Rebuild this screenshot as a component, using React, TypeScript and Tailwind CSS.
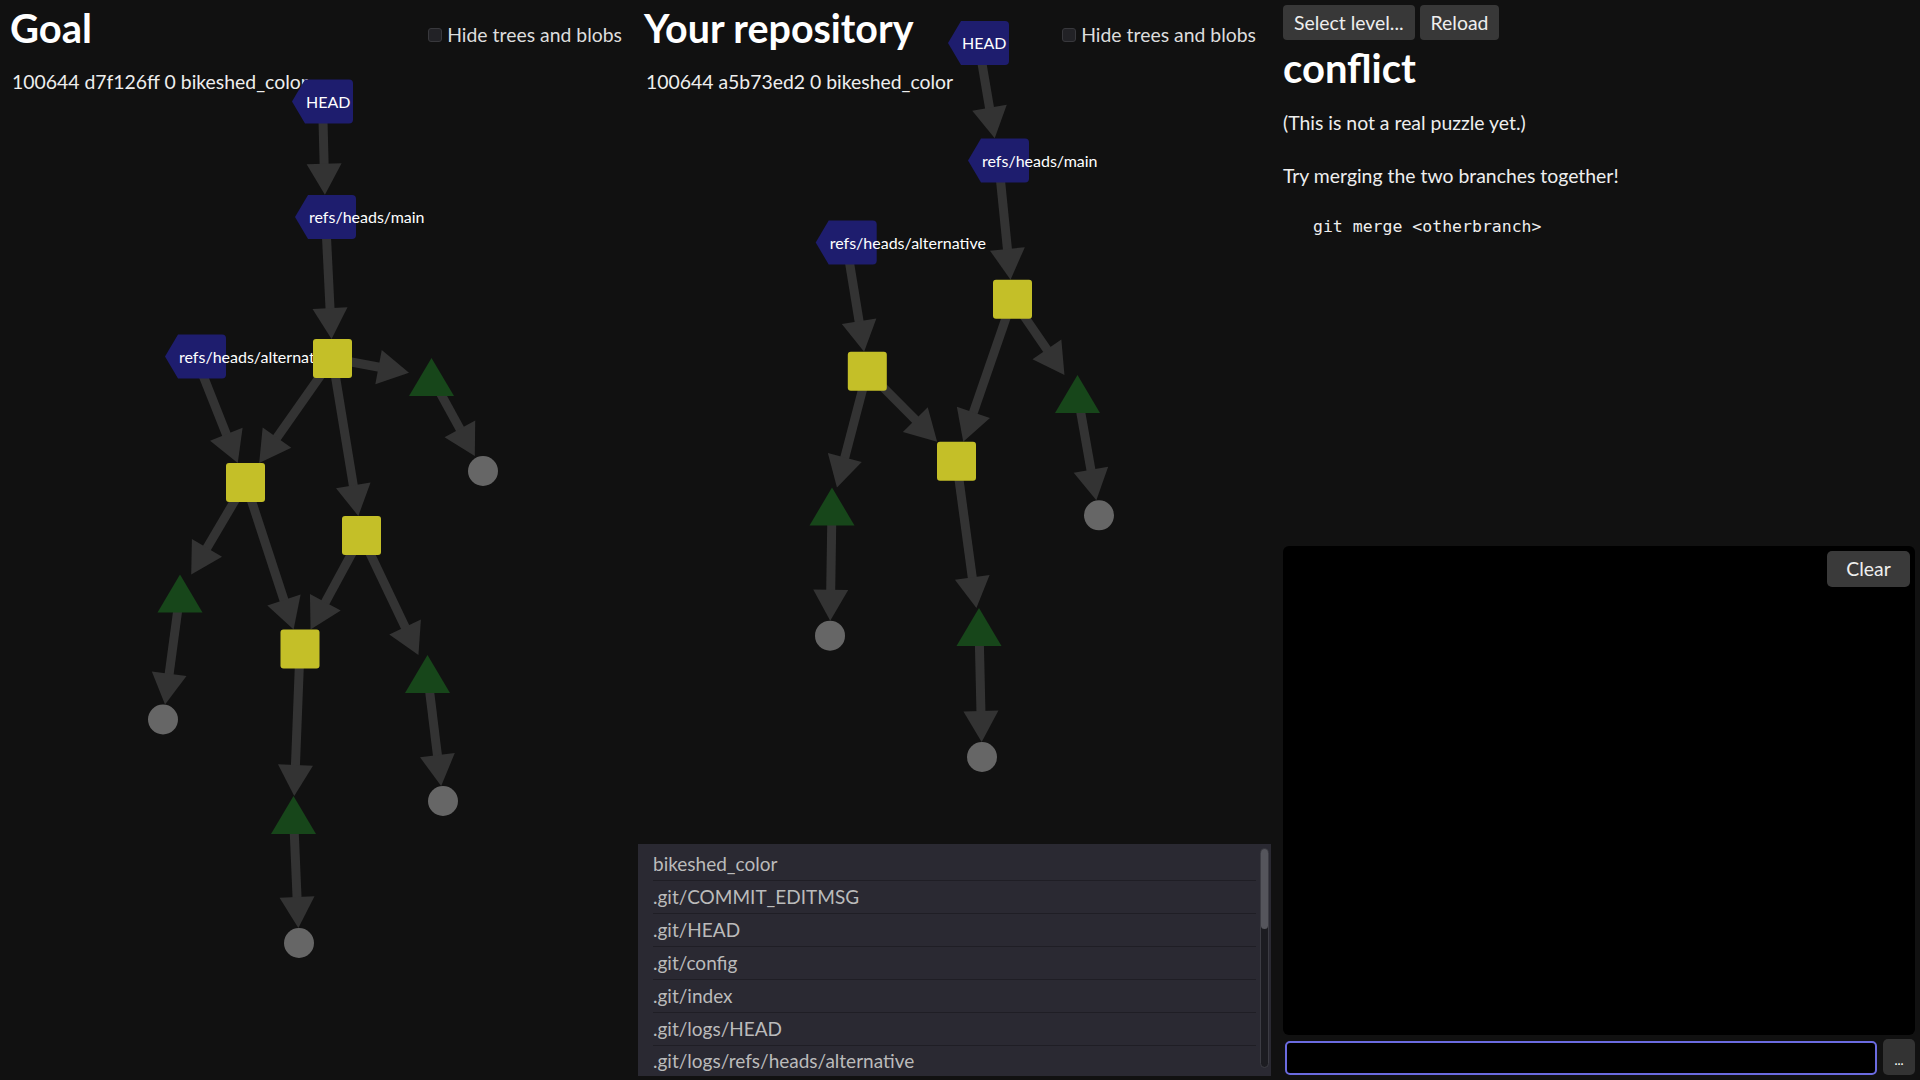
import React from "react";

type NT = "ref" | "commit" | "tree" | "blob";
type N = { id: string; t: NT; x: number; y: number; label?: string };

const HALF: Record<NT, [number, number]> = {
  ref: [30.5, 22.25],
  commit: [19.5, 19.5],
  tree: [22.5, 19],
  blob: [15, 15],
};

const ctr = (n: N) => (n.t === "ref" ? { x: n.x + 30.5, y: n.y } : { x: n.x, y: n.y });

function Edge({ a, b }: { a: N; b: N }) {
  const s = ctr(a);
  const t = ctr(b);
  let ux = s.x - t.x;
  let uy = s.y - t.y;
  const len = Math.hypot(ux, uy);
  ux /= len;
  uy /= len;
  const [hx, hy] = HALF[b.t];
  const d = Math.min(
    Math.abs(ux) > 1e-6 ? hx / Math.abs(ux) : Infinity,
    Math.abs(uy) > 1e-6 ? hy / Math.abs(uy) : Infinity
  );
  const tipX = t.x + ux * d;
  const tipY = t.y + uy * d;
  const bx = tipX + ux * 31;
  const by = tipY + uy * 31;
  const nx = -uy;
  const ny = ux;
  return (
    <g>
      <line x1={s.x} y1={s.y} x2={bx - ux} y2={by - uy} stroke="#333333" strokeWidth={9} />
      <polygon
        points={`${tipX},${tipY} ${bx + nx * 17.5},${by + ny * 17.5} ${bx - nx * 17.5},${by - ny * 17.5}`}
        fill="#333333"
      />
    </g>
  );
}

function Node({ n }: { n: N }) {
  if (n.t === "ref") {
    const L = n.x;
    const R = n.x + 61;
    const cy = n.y;
    return (
      <g>
        <path
          d={`M${L} ${cy} L${L + 13} ${cy - 22} H${R - 4} Q${R} ${cy - 22} ${R} ${cy - 18} V${cy + 18} Q${R} ${cy + 22} ${R - 4} ${cy + 22} H${L + 13} Z`}
          fill="#1e1d6e"
        />
        <text x={L + 14} y={cy + 6} fill="#ffffff" fontSize={16} fontFamily="Lato, sans-serif">
          {n.label}
        </text>
      </g>
    );
  }
  if (n.t === "commit") {
    return <rect x={n.x - 19.5} y={n.y - 19.5} width={39} height={39} rx={3} fill="#c4bf28" />;
  }
  if (n.t === "tree") {
    return (
      <polygon
        points={`${n.x},${n.y - 19} ${n.x + 22.5},${n.y + 19} ${n.x - 22.5},${n.y + 19}`}
        fill="#17461a"
      />
    );
  }
  return <circle cx={n.x} cy={n.y} r={15} fill="#666666" />;
}

function Graph({ nodes, edges, ox }: { nodes: N[]; edges: [string, string][]; ox: number }) {
  const m: Record<string, N> = {};
  nodes.forEach((n) => (m[n.id] = n));
  const order: NT[] = ["ref", "commit", "tree", "blob"];
  return (
    <svg
      className="pointer-events-none absolute left-0 top-0 overflow-visible"
      width={634}
      height={1080}
      viewBox={`${ox} 0 634 1080`}
    >
      {edges.map(([a, b]) => (
        <Edge key={a + b} a={m[a]} b={m[b]} />
      ))}
      {order.map((t) =>
        nodes.filter((n) => n.t === t).map((n) => <Node key={n.id} n={n} />)
      )}
    </svg>
  );
}

const goalNodes: N[] = [
  { id: "HEAD", t: "ref", x: 292, y: 101.5, label: "HEAD" },
  { id: "main", t: "ref", x: 295, y: 217, label: "refs/heads/main" },
  { id: "alt", t: "ref", x: 165, y: 356.5, label: "refs/heads/alternative" },
  { id: "C1", t: "commit", x: 332.5, y: 358.5 },
  { id: "C2", t: "commit", x: 245.5, y: 482.5 },
  { id: "C3", t: "commit", x: 361.5, y: 535.5 },
  { id: "C4", t: "commit", x: 300, y: 649 },
  { id: "T1", t: "tree", x: 431.5, y: 377 },
  { id: "T2", t: "tree", x: 180, y: 593.5 },
  { id: "T3", t: "tree", x: 427.5, y: 674 },
  { id: "T4", t: "tree", x: 293.5, y: 815 },
  { id: "B1", t: "blob", x: 483, y: 471 },
  { id: "B2", t: "blob", x: 163, y: 719.5 },
  { id: "B3", t: "blob", x: 443, y: 801 },
  { id: "B4", t: "blob", x: 299, y: 943 },
];
const goalEdges: [string, string][] = [
  ["HEAD", "main"],
  ["main", "C1"],
  ["alt", "C2"],
  ["C1", "T1"],
  ["T1", "B1"],
  ["C1", "C2"],
  ["C1", "C3"],
  ["C2", "T2"],
  ["T2", "B2"],
  ["C2", "C4"],
  ["C3", "C4"],
  ["C3", "T3"],
  ["T3", "B3"],
  ["C4", "T4"],
  ["T4", "B4"],
];

const repoNodes: N[] = [
  { id: "HEAD", t: "ref", x: 948, y: 43, label: "HEAD" },
  { id: "main", t: "ref", x: 968, y: 160.5, label: "refs/heads/main" },
  { id: "alt", t: "ref", x: 815.7, y: 242.5, label: "refs/heads/alternative" },
  { id: "R1", t: "commit", x: 1012.5, y: 299.3 },
  { id: "R2", t: "commit", x: 867.3, y: 371.3 },
  { id: "R3", t: "commit", x: 956.5, y: 461.2 },
  { id: "T1", t: "tree", x: 1077.5, y: 394 },
  { id: "T2", t: "tree", x: 832, y: 506.5 },
  { id: "T3", t: "tree", x: 979, y: 627 },
  { id: "B1", t: "blob", x: 1099, y: 515.3 },
  { id: "B2", t: "blob", x: 830, y: 635.7 },
  { id: "B3", t: "blob", x: 982, y: 757 },
];
const repoEdges: [string, string][] = [
  ["HEAD", "main"],
  ["main", "R1"],
  ["alt", "R2"],
  ["R1", "T1"],
  ["R1", "R3"],
  ["R2", "R3"],
  ["R2", "T2"],
  ["T1", "B1"],
  ["T2", "B2"],
  ["R3", "T3"],
  ["T3", "B3"],
];

const files = [
  "bikeshed_color",
  ".git/COMMIT_EDITMSG",
  ".git/HEAD",
  ".git/config",
  ".git/index",
  ".git/logs/HEAD",
  ".git/logs/refs/heads/alternative",
];

function Header({ title, big }: { title: string; big: boolean }) {
  return (
    <div className="flex items-start justify-between pl-[10px] pr-[12px] pt-[5px]">
      <h1
        className={
          big
            ? "text-[40px] font-bold leading-[46px] text-white"
            : "text-[39.4px] font-bold leading-[46px] text-white"
        }
      >
        {title}
      </h1>
      <label className="mt-[18px] flex items-center gap-[5px] text-[19.4px] leading-[24px] text-[#dddddd]">
        <span className="h-[14px] w-[14px] rounded-[3px] border border-[#38383c] bg-[#222226]" />
        Hide trees and blobs
      </label>
    </div>
  );
}

export default function App() {
  return (
    <div className="flex h-screen w-full overflow-hidden bg-[#111111] text-white [font-family:Lato,'Noto_Sans',sans-serif]">
      <section className="relative flex w-[634px] shrink-0 flex-col">
        <Header title="Goal" big={true} />
        <div className="mt-[19px] pl-[12px] text-[19.4px] leading-[24px] text-[#eeeeee]">
          100644 d7f126ff 0 bikeshed_color
        </div>
        <Graph nodes={goalNodes} edges={goalEdges} ox={0} />
      </section>

      <section className="relative flex w-[634px] shrink-0 flex-col">
        <Header title="Your repository" big={false} />
        <div className="mt-[19px] pl-[12px] text-[19.4px] leading-[24px] text-[#eeeeee]">
          100644 a5b73ed2 0 bikeshed_color
        </div>
        <Graph nodes={repoNodes} edges={repoEdges} ox={634} />
        <div className="relative z-10 mb-[4px] ml-[4px] mt-auto h-[232px] w-[633px] overflow-hidden bg-[#2a2932] pt-[4px]">
          {files.map((f, i) => (
            <div
              key={f}
              className={
                i === files.length - 1
                  ? "mx-[15px] h-[28px] overflow-hidden text-[19px] leading-[30px] text-[#bbbbbb]"
                  : "mx-[15px] h-[33px] border-b border-[#1f1e25] text-[19px] leading-[32px] text-[#bbbbbb]"
              }
            >
              {f}
            </div>
          ))}
          <div className="absolute bottom-[8px] right-[2px] top-[4px] w-[9px] rounded-full border border-[#3c3c43] bg-[#1c1c21]">
            <div className="h-[80px] w-full rounded-full bg-[#55555c]" />
          </div>
        </div>
      </section>

      <section className="flex min-w-0 flex-1 flex-col pb-[5px] pl-[15px] pr-[5px]">
        <div className="mt-[5px] flex gap-[5px]">
          <button className="h-[35px] rounded-[4px] bg-[#383838] px-[11px] text-[19.4px] leading-[24px] text-[#eeeeee]">
            Select level...
          </button>
          <button className="h-[35px] rounded-[4px] bg-[#383838] px-[11px] text-[19.4px] leading-[24px] text-[#eeeeee]">
            Reload
          </button>
        </div>
        <h1 className="mt-[5px] text-[40px] font-bold leading-[46px] text-white">conflict</h1>
        <p className="mt-[17px] text-[19.4px] leading-[30px] text-[#eeeeee]">(This is not a real puzzle yet.)</p>
        <p className="mt-[23px] text-[19.4px] leading-[30px] text-[#eeeeee]">Try merging the two branches together!</p>
        <pre className="ml-[30px] mt-[26px] text-[16.5px] leading-[20px] text-[#eeeeee] [font-family:'DejaVu_Sans_Mono',monospace]">
          git merge &lt;otherbranch&gt;
        </pre>
        <div className="relative mt-auto h-[489px] rounded-[6px] bg-black">
          <button className="absolute right-[5px] top-[5px] h-[36px] w-[83px] rounded-[5px] bg-[#3a3a3a] text-[19.4px] leading-[24px] text-[#eeeeee]">
            Clear
          </button>
        </div>
        <div className="mt-[4px] flex h-[36px] items-end gap-[6px]">
          <input className="ml-[2px] h-[34px] min-w-0 flex-1 rounded-[5px] border-2 border-[#6b6be0] bg-black text-white outline-none" />
          <button className="flex h-[36px] w-[32px] items-end justify-center rounded-[5px] bg-[#333333] pb-[8px] text-[13px] leading-none text-white">
            ...
          </button>
        </div>
      </section>
    </div>
  );
}
